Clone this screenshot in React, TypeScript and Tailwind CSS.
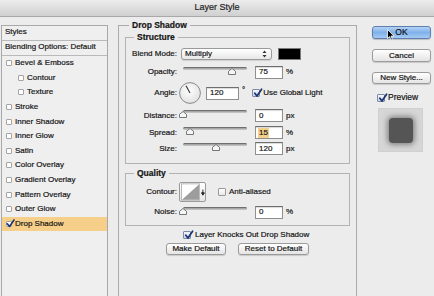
import React from "react";

type Item = { label: string; indent?: boolean; checked?: boolean; active?: boolean };

const items: Item[] = [
  { label: "Bevel & Emboss" },
  { label: "Contour", indent: true },
  { label: "Texture", indent: true },
  { label: "Stroke" },
  { label: "Inner Shadow" },
  { label: "Inner Glow" },
  { label: "Satin" },
  { label: "Color Overlay" },
  { label: "Gradient Overlay" },
  { label: "Pattern Overlay" },
  { label: "Outer Glow" },
  { label: "Drop Shadow", checked: true, active: true },
];

function CheckMark() {
  return (
    <svg className="absolute left-[0px] top-[-2px]" width="10" height="10" viewBox="0 0 10 10">
      <path d="M1.8 5.2 L4 8 L8.6 1.2" fill="none" stroke="#1c3470" strokeWidth="1.7" strokeLinecap="round" strokeLinejoin="round" />
    </svg>
  );
}

function SmallBox({ checked }: { checked?: boolean }) {
  return (
    <div className="relative h-[6px] w-[6px] shrink-0 rounded-[1px] border border-[#a3a3a3] bg-white">
      {checked && (
        <svg className="absolute left-[-1px] top-[-3px]" width="9" height="9" viewBox="0 0 9 9">
          <path d="M1.3 4.8 L3.5 7.5 L8 1" fill="none" stroke="#1c3470" strokeWidth="1.6" strokeLinecap="round" strokeLinejoin="round" />
        </svg>
      )}
    </div>
  );
}

function Box({ checked }: { checked?: boolean }) {
  return (
    <div
      className={
        checked
          ? "relative h-[8px] w-[8px] shrink-0 rounded-[1px] border border-[#7d8ba8] bg-gradient-to-b from-[#f4f7fc] to-[#c9d5ea]"
          : "relative h-[8px] w-[8px] shrink-0 rounded-[1px] border border-[#9a9a9a] bg-gradient-to-b from-white to-[#e9e9e9]"
      }
    >
      {checked && <CheckMark />}
    </div>
  );
}

function Slider({ pos }: { pos: number }) {
  return (
    <div className="relative ml-[4px] h-[12px] w-[64px] shrink-0">
      <div className="mt-[1px] h-[3px] w-full rounded-full border-t border-[#6f6f6f] bg-gradient-to-b from-[#9a9a9a] to-[#cfcfcf]" />
      <svg className="absolute top-[2px]" style={{ left: pos - 4 }} width="8" height="7" viewBox="0 0 8 7">
        <path d="M4 0.5 L7.5 3.3 V6.5 H0.5 V3.3 Z" fill="#f6f6f6" stroke="#777" strokeWidth="1" />
      </svg>
    </div>
  );
}

function Input({ value, w = 28, hl }: { value: string; w?: number; hl?: boolean }) {
  return (
    <div
      className="flex h-[13px] shrink-0 items-center border border-[#8f8f8f] border-t-[#6e6e6e] bg-white pl-[2px] text-[8px] leading-none shadow-[inset_0_1px_1px_rgba(0,0,0,0.15)]"
      style={{ width: w }}
    >
      <span className={hl ? "bg-[#f3d08a] px-[1px] py-[1px]" : "px-[1px]"}>{value}</span>
    </div>
  );
}

function Label({ children }: { children: React.ReactNode }) {
  return <div className="w-[51px] shrink-0 text-right text-[8px] leading-none">{children}</div>;
}

function SliderRow({ label, pos, value, unit, hl, mt }: { label: string; pos: number; value: string; unit: string; hl?: boolean; mt: string }) {
  return (
    <div className={`flex h-[13px] items-center ${mt}`}>
      <Label>{label}</Label>
      <div className="ml-[2px] flex h-[13px] items-start">
        <Slider pos={pos} />
      </div>
      <div className="ml-[8px]">
        <Input value={value} hl={hl} />
      </div>
      <span className="ml-[3px] text-[8px] leading-none">{unit}</span>
    </div>
  );
}

function AquaButton({ children, w, h = 12, primary }: { children: React.ReactNode; w: number; h?: number; primary?: boolean }) {
  return (
    <div
      className={
        primary
          ? "flex items-center justify-center rounded-[3px] border border-[#5c7fb0] bg-gradient-to-b from-[#b4d2f5] via-[#80b1ea] to-[#a6cbf3] text-[8.5px] leading-none text-[#111] shadow-[0_1px_1px_rgba(0,0,0,0.2)]"
          : "flex items-center justify-center rounded-[3px] border border-[#9b9b9b] bg-gradient-to-b from-white to-[#e4e4e4] text-[8px] leading-none text-[#111] shadow-[0_1px_1px_rgba(0,0,0,0.15)]"
      }
      style={{ width: w, height: h }}
    >
      {children}
    </div>
  );
}

export default function App() {
  return (
    <div className="relative h-[296px] w-[434px] overflow-hidden bg-[#ececec] font-['Liberation_Sans',Arial,sans-serif] text-[#161616] [-webkit-text-stroke:0.2px_#161616]">
      {/* title bar */}
      <div className="flex h-[17px] items-center justify-center border-b border-[#a8a8a8] bg-gradient-to-b from-[#ececec] to-[#d0d0d0] text-[9px] text-[#2a2a2a]">
        Layer Style
      </div>

      <div className="flex items-start pt-[3px]">
        {/* left panel */}
        <div className="ml-[1px] mt-[5px] flex h-[280px] w-[107px] shrink-0 flex-col border border-b-0 border-[#a9a9a9] bg-[#efefef] text-[8px]">
          <div className="flex h-[15px] items-center border-b border-[#b9b9b9] pb-[3px] pl-[3px]">Styles</div>
          <div className="flex h-[15px] items-center border-b border-[#b9b9b9] pb-[3px] pl-[3px]">Blending Options: Default</div>
          {items.map((it) => (
            <div
              key={it.label}
              className={`flex h-[14.6px] items-center gap-[3px] ${it.indent ? "pl-[16px]" : "pl-[4px]"} ${it.active ? "bg-[#f6cf8a]" : ""}`}
            >
              <SmallBox checked={it.checked} />
              <span className="leading-none">{it.label}</span>
            </div>
          ))}
        </div>

        {/* main group */}
        <fieldset className="ml-[10px] h-[285px] w-[239px] shrink-0 border border-[#ababab] px-[6px] pt-[2px]">
          <legend className="ml-[4px] px-[3px] text-[8.5px] font-bold leading-[10px]">Drop Shadow</legend>

          <fieldset className="border border-[#b2b2b2] pb-[8px] pt-[6px]">
            <legend className="ml-[8px] px-[3px] text-[8.5px] font-bold leading-[10px]">Structure</legend>

            {/* blend mode */}
            <div className="flex h-[12px] items-center">
              <Label>Blend Mode:</Label>
              <div className="ml-[4px] flex h-[12px] w-[91px] items-center justify-between rounded-[3px] border border-[#9a9a9a] bg-gradient-to-b from-white to-[#e8e8e8] pl-[3px] pr-[4px] text-[8px] leading-none shadow-[0_1px_1px_rgba(0,0,0,0.12)]">
                <span>Multiply</span>
                <svg width="5" height="8" viewBox="0 0 5 8">
                  <path d="M2.5 0.5 L4.5 3 H0.5 Z M2.5 7.5 L4.5 5 H0.5 Z" fill="#333" />
                </svg>
              </div>
              <div className="ml-[6px] h-[12px] w-[23px] border border-[#7a7a7a] bg-black" />
            </div>

            {/* opacity */}
            <div className="mt-[6px] flex h-[12px] items-center">
              <Label>Opacity:</Label>
              <div className="ml-[2px] flex h-[12px] items-start">
                <Slider pos={49} />
              </div>
              <div className="ml-[8px]">
                <Input value="75" />
              </div>
              <span className="ml-[3px] text-[8px] leading-none">%</span>
            </div>

            {/* angle */}
            <div className="mt-[4px] flex h-[22px] items-center">
              <Label>Angle:</Label>
              <svg className="ml-[2px] shrink-0" width="22" height="22" viewBox="0 0 22 22">
                <defs>
                  <radialGradient id="dial" cx="0.45" cy="0.4" r="0.6">
                    <stop offset="0" stopColor="#ffffff" />
                    <stop offset="1" stopColor="#e2e2e2" />
                  </radialGradient>
                </defs>
                <circle cx="11" cy="11" r="10.4" fill="url(#dial)" stroke="#8a8a8a" strokeWidth="1" />
                <path d="M11 11 L7 3.8" stroke="#333" strokeWidth="1.1" />
              </svg>
              <div className="ml-[5px]">
                <Input value="120" w={33} />
              </div>
              <span className="ml-[3px] mb-[6px] text-[8px] leading-none">°</span>
              <div className="ml-[7px]">
                <Box checked />
              </div>
              <span className="ml-[3px] text-[8px] leading-none">Use Global Light</span>
            </div>

            <SliderRow label="Distance:" pos={0} value="0" unit="px" mt="mt-[5px]" />
            <SliderRow label="Spread:" pos={7} value="15" unit="%" hl mt="mt-[4px]" />
            <SliderRow label="Size:" pos={33} value="120" unit="px" mt="mt-[3px]" />
          </fieldset>

          <fieldset className="mt-[4px] border border-[#b2b2b2] pb-[7px] pt-[4px]">
            <legend className="ml-[8px] px-[3px] text-[8.5px] font-bold leading-[10px]">Quality</legend>

            <div className="flex h-[20px] items-center">
              <Label>Contour:</Label>
              <div className="ml-[2px] flex h-[20px] w-[27px] items-center rounded-[2px] border border-[#9a9a9a] bg-gradient-to-b from-white to-[#e6e6e6]">
                <svg width="20" height="18" viewBox="0 0 20 18" className="ml-[1px]">
                  <rect x="0.5" y="0.5" width="19" height="17" fill="#fff" stroke="#b5b5b5" />
                  <path d="M1 17 L19 1 V17 Z" fill="#9d9d9d" />
                </svg>
                <svg width="4" height="7" viewBox="0 0 4 7" className="ml-[1px]">
                  <path d="M2 0.5 V4 M0.5 3.8 L2 6.3 L3.5 3.8 Z" stroke="#222" strokeWidth="1" fill="#222" />
                </svg>
              </div>
              <div className="ml-[12px]">
                <Box />
              </div>
              <span className="ml-[3px] text-[8px] leading-none">Anti-aliased</span>
            </div>

            <div className="mt-[4px] flex h-[12px] items-center">
              <Label>Noise:</Label>
              <div className="ml-[2px] flex h-[12px] items-start">
                <Slider pos={0} />
              </div>
              <div className="ml-[8px]">
                <Input value="0" />
              </div>
              <span className="ml-[3px] text-[8px] leading-none">%</span>
            </div>
          </fieldset>

          <div className="ml-[58px] mt-[4px] flex h-[9px] items-center">
            <Box checked />
            <span className="ml-[4px] text-[8px] leading-none">Layer Knocks Out Drop Shadow</span>
          </div>

          <div className="mt-[4px] flex justify-center gap-[12px]">
            <AquaButton w={60}>Make Default</AquaButton>
            <AquaButton w={71}>Reset to Default</AquaButton>
          </div>
        </fieldset>

        {/* right column */}
        <div className="ml-[15px] mt-[6px] flex w-[59px] shrink-0 flex-col">
          <AquaButton w={59} h={13} primary>OK</AquaButton>
          <div className="mt-[10px]">
            <AquaButton w={59} h={13}>Cancel</AquaButton>
          </div>
          <div className="mt-[10px]">
            <AquaButton w={59}>New Style...</AquaButton>
          </div>
          <div className="ml-[5px] mt-[9px] flex h-[9px] items-center">
            <Box checked />
            <span className="ml-[3px] text-[8.5px] leading-none">Preview</span>
          </div>
          <div className="ml-[6px] mt-[6px] flex h-[44px] w-[45px] items-center justify-center border border-[#d0d0d0] bg-[#d6d6d6]">
            <div className="h-[25px] w-[24px] rounded-[4px] bg-[#555] shadow-[0_0_5px_2px_rgba(60,60,60,0.5)]" />
          </div>
        </div>
      </div>

      {/* mouse cursor over OK */}
      <svg className="absolute left-[387px] top-[29px]" width="8" height="12" viewBox="0 0 8 12">
        <path d="M0.5 0.5 V9.5 L2.6 7.6 L4 11 L5.4 10.4 L4 7.1 H7 Z" fill="#000" stroke="#fff" strokeWidth="0.8" />
      </svg>
    </div>
  );
}
